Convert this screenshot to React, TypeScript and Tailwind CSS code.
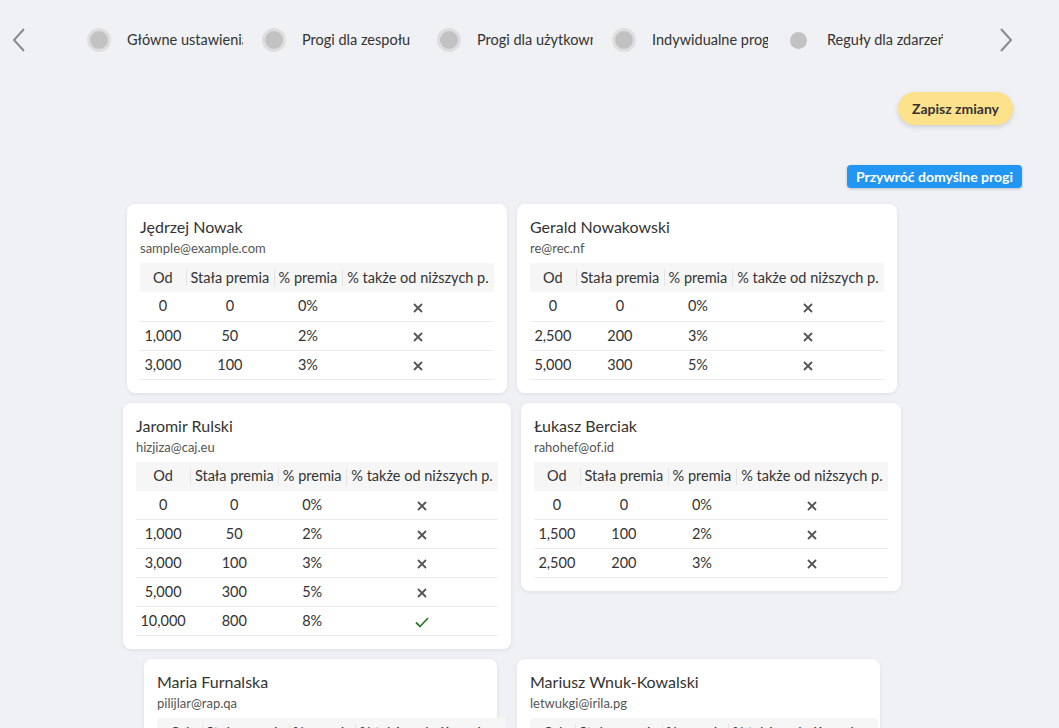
import { JSX } from 'react';

type Row = { from: string; fixed: string; pct: string; lower: boolean };

interface Person {
  name: string;
  email: string;
  width: string;
  rows: Row[];
}

const steps = [
  'Główne ustawienia',
  'Progi dla zespołu',
  'Progi dla użytkowników',
  'Indywidualne progi',
  'Reguły dla zdarzeń',
];

const r = (from: string, fixed: string, pct: string, lower = false): Row => ({ from, fixed, pct, lower });

const rows: { gap: string; people: Person[] }[] = [
  {
    gap: 'gap-[10px]',
    people: [
      {
        name: 'Jędrzej Nowak',
        email: 'sample@example.com',
        width: 'w-[380px]',
        rows: [r('0', '0', '0%'), r('1,000', '50', '2%'), r('3,000', '100', '3%')],
      },
      {
        name: 'Gerald Nowakowski',
        email: 're@rec.nf',
        width: 'w-[380px]',
        rows: [r('0', '0', '0%'), r('2,500', '200', '3%'), r('5,000', '300', '5%')],
      },
    ],
  },
  {
    gap: 'gap-[10px]',
    people: [
      {
        name: 'Jaromir Rulski',
        email: 'hizjiza@caj.eu',
        width: 'w-[388px]',
        rows: [
          r('0', '0', '0%'),
          r('1,000', '50', '2%'),
          r('3,000', '100', '3%'),
          r('5,000', '300', '5%'),
          r('10,000', '800', '8%', true),
        ],
      },
      {
        name: 'Łukasz Berciak',
        email: 'rahohef@of.id',
        width: 'w-[380px]',
        rows: [r('0', '0', '0%'), r('1,500', '100', '2%'), r('2,500', '200', '3%')],
      },
    ],
  },
  {
    gap: 'gap-[20px]',
    people: [
      {
        name: 'Maria Furnalska',
        email: 'pilijlar@rap.qa',
        width: 'w-[353px]',
        rows: [r('0', '0', '0%'), r('1,000', '50', '2%')],
      },
      {
        name: 'Mariusz Wnuk-Kowalski',
        email: 'letwukgi@irila.pg',
        width: 'w-[363px]',
        rows: [r('0', '0', '0%'), r('1,000', '50', '2%')],
      },
    ],
  },
];

function Cross() {
  return (
    <svg className="w-[10px] h-[10px] inline-block" viewBox="0 0 10 10" fill="none" stroke="#555" strokeWidth={1.8}>
      <path d="M1 1l8 8M9 1l-8 8" />
    </svg>
  );
}

function Check() {
  return (
    <svg className="w-[14px] h-[11px] inline-block" viewBox="0 0 14 11" fill="none" stroke="#2e7d32" strokeWidth={1.8}>
      <path d="M1 5.5l4 4L13 1" />
    </svg>
  );
}

function Chevron({ dir }: { dir: 'left' | 'right' }) {
  return (
    <svg className="w-[14px] h-[26px]" viewBox="0 0 14 26" fill="none" stroke="#8a8a8a" strokeWidth={2}>
      <path d={dir === 'left' ? 'M12 2L2 13l10 11' : 'M2 2l10 11L2 24'} />
    </svg>
  );
}

function PersonCard({ person }: { person: Person }): JSX.Element {
  const heads = ['Od', 'Stała premia', '% premia', '% także od niższych p.'];
  return (
    <div className={`${person.width} bg-white rounded-lg shadow-[0_1px_4px_rgba(0,0,0,0.08)] px-[13px] pt-[11px] pb-[13px]`}>
      <div className="text-[16px] leading-6 text-[#333]">{person.name}</div>
      <div className="text-[13px] leading-[18px] text-[#555] mb-[6px]">{person.email}</div>
      <table className="w-full text-[14.5px] text-[#333] text-center border-collapse">
        <thead>
          <tr className="bg-[#f6f6f7] h-[29px]">
            {heads.map((h, i) => (
              <th key={h} className="font-normal px-1 whitespace-nowrap relative">
                {i > 0 && <span className="absolute left-0 top-[6px] bottom-[6px] w-px bg-[#e4e4e6]" />}
                {h}
              </th>
            ))}
          </tr>
        </thead>
        <tbody>
          {person.rows.map((row, i) => (
            <tr key={i} className="h-[29px] border-b border-[#ececee]">
              <td className="px-1">{row.from}</td>
              <td className="px-1">{row.fixed}</td>
              <td className="px-1">{row.pct}</td>
              <td className="px-1">{row.lower ? <Check /> : <Cross />}</td>
            </tr>
          ))}
        </tbody>
      </table>
    </div>
  );
}

export default function App() {
  return (
    <div className="min-h-screen bg-[#f0f1f5] font-['Lato','Noto_Sans',sans-serif] overflow-hidden">
      {/* Stepper */}
      <div className="flex items-center h-[80px] pl-[12px]">
        <Chevron dir="left" />
        <div className="flex items-center ml-[61px]">
          {steps.map((s, i) => (
            <div key={s} className="flex items-center w-[175px]">
              {i < steps.length - 1 ? (
                <span className="w-6 h-6 rounded-full bg-[#c2c2c2] border-[3px] border-[#dedede] shrink-0" />
              ) : (
                <span className="w-[17px] h-[17px] rounded-full bg-[#c2c2c2] ml-[3px] mr-[4px] shrink-0" />
              )}
              <span className="ml-4 w-[116px] overflow-hidden whitespace-nowrap text-[14.5px] text-[#333]">{s}</span>
            </div>
          ))}
        </div>
        <div className="ml-[37px]">
          <Chevron dir="right" />
        </div>
      </div>

      <div className="w-[1024px]">
        <div className="flex justify-end pr-[11px] mt-[12px]">
          <button className="h-[33px] px-[14px] rounded-full bg-[#fde18b] text-[14px] font-bold text-[#333] shadow-[0_2px_5px_rgba(0,0,0,0.15)]">
            Zapisz zmiany
          </button>
        </div>
        <div className="flex justify-end pr-[2px] mt-[40px]">
          <button className="h-[23px] px-[9px] rounded bg-[#2196f3] text-[14px] font-bold text-white shadow-[0_1px_3px_rgba(0,0,0,0.2)]">
            Przywróć domyślne progi
          </button>
        </div>

        <div className="flex flex-col gap-[10px] mt-[16px]">
          {rows.map((row, i) => (
            <div key={i} className={`flex justify-center items-start ${row.gap}`}>
              {row.people.map((p) => (
                <PersonCard key={p.email} person={p} />
              ))}
            </div>
          ))}
        </div>
      </div>
    </div>
  );
}
